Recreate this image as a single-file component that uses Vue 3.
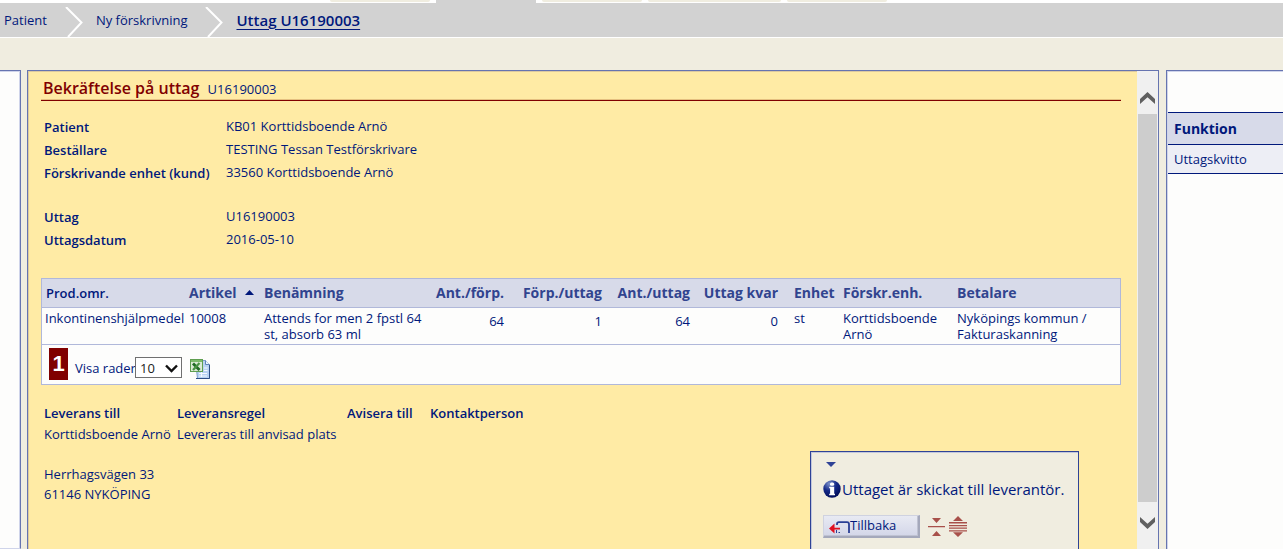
<script setup>
import { ref } from 'vue'

const tabs = [
  { id: 1, size: 'medium' },
  { id: 2, size: 'medium', active: true },
  { id: 3, size: 'medium' },
  { id: 4, size: 'wide' },
  { id: 5, size: 'medium' },
]

const patientInfo = [
  ['Patient', 'KB01 Korttidsboende Arnö'],
  ['Beställare', 'TESTING Tessan Testförskrivare'],
  ['Förskrivande enhet (kund)', '33560 Korttidsboende Arnö'],
]
const orderInfo = [
  ['Uttag', 'U16190003'],
  ['Uttagsdatum', '2016-05-10'],
]

const rows = [
  {
    area: 'Inkontinenshjälpmedel',
    article: '10008',
    name: 'Attends for men 2 fpstl 64 st, absorb 63 ml',
    perPack: 64,
    packs: 1,
    amount: 64,
    left: 0,
    unit: 'st',
    prescriber: 'Korttidsboende Arnö',
    payer: 'Nyköpings kommun / Fakturaskanning',
  },
]

const pageSize = ref('10')
</script>

<template>
  <div class="page">
    <div class="tabs">
      <span v-for="t in tabs" :key="t.id" class="tab" :class="[t.size, { active: t.active }]"></span>
    </div>

    <nav class="crumbs">
      <a href="#">Patient</a>
      <svg class="chevron" width="18" height="30" viewBox="0 0 18 30"><path d="M1 0 16.500 15.500 3 30" /></svg>
      <a href="#">Ny förskrivning</a>
      <svg class="chevron" width="18" height="30" viewBox="0 0 18 30"><path d="M1 0 16.500 15.500 3 30" /></svg>
      <a href="#" class="current">Uttag U16190003</a>
    </nav>

    <div class="columns">
      <aside class="left panel"></aside>

      <main class="center panel">
        <div class="content">
          <h1>Bekräftelse på uttag <small>U16190003</small></h1>

          <dl class="info">
            <template v-for="[k, v] in patientInfo" :key="k">
              <dt>{{ k }}</dt>
              <dd>{{ v }}</dd>
            </template>
          </dl>
          <dl class="info">
            <template v-for="[k, v] in orderInfo" :key="k">
              <dt>{{ k }}</dt>
              <dd>{{ v }}</dd>
            </template>
          </dl>

          <div class="grid">
            <table class="items">
              <colgroup>
                <col class="c-area" /><col class="c-article" /><col class="c-name" />
                <col class="c-pack" /><col class="c-packs" /><col class="c-amount" />
                <col class="c-amount" /><col class="c-unit" /><col class="c-presc" /><col />
              </colgroup>
              <thead>
                <tr>
                  <th class="plain">Prod.omr.</th>
                  <th>
                    <span class="sorted">Artikel
                      <svg width="9" height="5" viewBox="0 0 9 5"><path d="M0 5 4.500 0 9 5z" fill="#00187b" /></svg>
                    </span>
                  </th>
                  <th>Benämning</th>
                  <th class="num">Ant./förp.</th>
                  <th class="num">Förp./uttag</th>
                  <th class="num">Ant./uttag</th>
                  <th class="num">Uttag kvar</th>
                  <th class="unit">Enhet</th>
                  <th>Förskr.enh.</th>
                  <th>Betalare</th>
                </tr>
              </thead>
              <tbody>
                <tr v-for="r in rows" :key="r.article">
                  <td>{{ r.area }}</td>
                  <td>{{ r.article }}</td>
                  <td>{{ r.name }}</td>
                  <td class="num">{{ r.perPack }}</td>
                  <td class="num">{{ r.packs }}</td>
                  <td class="num">{{ r.amount }}</td>
                  <td class="num">{{ r.left }}</td>
                  <td class="unit">{{ r.unit }}</td>
                  <td>{{ r.prescriber }}</td>
                  <td>{{ r.payer }}</td>
                </tr>
              </tbody>
            </table>
            <div class="pager">
              <strong class="pageno">1</strong>
              <label for="size">Visa rader</label>
              <span class="select">
                <select id="size" v-model="pageSize">
                  <option>10</option>
                  <option>25</option>
                  <option>50</option>
                </select>
                <svg width="13" height="9" viewBox="0 0 13 9"><path d="M1 1.500 6.500 7 12 1.500" fill="none" stroke="#111" stroke-width="2.400" /></svg>
              </span>
              <button class="excel" aria-label="Excel">
                <svg width="20" height="20" viewBox="0 0 20 20">
                  <path d="M5.500 1.500h10l4 4v14h-12z" fill="#b9d3f3" stroke="#7d9fcb" />
                  <path d="M15.500 1.500v4h4" fill="#eef6ff" stroke="#5f84b8" />
                  <path d="M19.500 6v13.500H6" fill="none" stroke="#2f4f86" />
                  <path d="M9 17h8M9 14.500h8M14 9h3.500M14 11.500h3.500M11.500 13v5" stroke="#f4f9ff" />
                  <rect x=".5" y=".5" width="12" height="12" fill="#dcebd6" stroke="#5f9e50" />
                  <path d="M1 2h11" stroke="#7dbb6c" stroke-width="2" />
                  <path d="m3 4.500 6.500 6.500" stroke="#216b26" stroke-width="2.800" />
                  <path d="M9.500 4 3 11" stroke="#4a9444" stroke-width="2.200" />
                </svg>
              </button>
            </div>
          </div>

          <table class="delivery">
            <colgroup><col class="d-to" /><col class="d-rule" /><col class="d-notify" /><col /></colgroup>
            <thead>
              <tr><th>Leverans till</th><th>Leveransregel</th><th>Avisera till</th><th>Kontaktperson</th></tr>
            </thead>
            <tbody>
              <tr><td>Korttidsboende Arnö</td><td>Levereras till anvisad plats</td><td></td><td></td></tr>
              <tr><td></td><td></td><td></td><td></td></tr>
              <tr><td>Herrhagsvägen 33</td><td></td><td></td><td></td></tr>
              <tr><td>61146 NYKÖPING</td><td></td><td></td><td></td></tr>
            </tbody>
          </table>
        </div>

        <div class="scrollbar" aria-hidden="true">
          <svg width="15" height="12" viewBox="0 0 15 12"><path d="M0 7 7.500 0 15 7V12L7.500 5.300 0 12z" /></svg>
          <div class="thumb"></div>
          <svg width="15" height="12" viewBox="0 0 15 12"><path d="M0 5 7.500 12 15 5V0L7.500 6.700 0 0z" /></svg>
        </div>

        <section class="message">
          <button class="fold" aria-label="Fäll ihop">
            <svg width="10" height="5" viewBox="0 0 10 5"><path d="M0 0h10L5 5z" fill="#2f4396" /></svg>
          </button>
          <p>
            <svg width="18" height="18" viewBox="0 0 18 18">
              <defs>
                <radialGradient id="ball" cx=".35" cy=".2" r=".8">
                  <stop offset="0" stop-color="#7d92cb" />
                  <stop offset=".5" stop-color="#152a88" />
                  <stop offset="1" stop-color="#020f5c" />
                </radialGradient>
              </defs>
              <circle cx="9" cy="9" r="8.700" fill="url(#ball)" />
              <rect x="7" y="2.500" width="4.200" height="3.200" rx="1.500" fill="#fff" />
              <path d="M6.200 6.800h5v7h.8v1.400H6.200v-1.400h.9V8.200h-.9z" fill="#fff" />
            </svg>
            Uttaget är skickat till leverantör.
          </p>
          <div class="actions">
            <button class="back">
              <svg width="21" height="13" viewBox="0 0 21 13">
                <path d="M8 4V3Q8 1.200 10 1.200H18Q20 1.200 20 3.200V12" fill="none" stroke="#2a3f95" stroke-width="1.800" />
                <path d="M7.500 9v3M9.500 11.500h1.500" stroke="#2a3f95" />
                <path d="M0 7.500 5.500 2.500V6.700H11V8.500H5.500V12.500z" fill="#e01020" />
              </svg>
              <span>Tillbaka</span>
            </button>
            <button class="icon" aria-label="Minimera">
              <svg width="17" height="20" viewBox="0 0 17 20" fill="#a8504a"><path d="M4 1h9L8.500 6zM0 9h17v1.300H0zM4 19h9l-4.500-5z" /></svg>
            </button>
            <button class="icon" aria-label="Maximera">
              <svg width="18" height="21" viewBox="0 0 18 21" fill="#a8504a"><path d="M4 5h10L9 0zM0 6h18v1.400H0zM0 9h18v1.200H0zM0 11.600h18v1.200H0zM0 14.200h18v1.200H0zM4 16.200h10l-5 4.800z" /></svg>
            </button>
          </div>
        </section>
      </main>

      <aside class="right panel">
        <h2>Funktion</h2>
        <a href="#">Uttagskvitto</a>
      </aside>
    </div>
  </div>
</template>

<style>
body { margin: 0; }
</style>

<style scoped>
* { box-sizing: border-box; }
.page {
  height: 100vh;
  display: flex;
  flex-direction: column;
  overflow: hidden;
  background: #f0ede0;
  color: #00187b;
  font: 13px/16px "Trebuchet MS", "Open Sans", sans-serif;
}
button { border: 0; padding: 0; background: none; font: inherit; color: inherit; }
svg { display: block; flex: none; }
a { color: inherit; text-decoration: none; }

.tabs { display: flex; gap: 6px; height: 3px; padding-left: 330px; background: #fff; flex: none; }
.tab { width: 100px; height: 2px; background: #f0ede0; border-radius: 0 0 3px 3px; }
.tab.wide { width: 133px; }
.tab.active { height: 3px; background: #d2d2d2; border-radius: 0; }

.crumbs {
  flex: none;
  display: flex;
  align-items: center;
  height: 35px;
  padding-left: 4px;
  background: #d2d2d2;
  border-bottom: 1px solid #fff;
}
.chevron { margin: 3px 13px 0 18px; }
.chevron path { fill: none; stroke: #fff; stroke-width: 2; }
.crumbs .current { font-size: 15px; font-weight: 600; text-decoration: underline; text-underline-offset: 3px; }

.columns { flex: 1; min-height: 0; display: flex; padding-top: 32px; }
.panel { border: 1px solid #6674b0; background: #fdfdfc; }
.left { width: 21px; flex: none; margin-right: 6px; border-left: 0; border-bottom-color: #cfd4ea; box-shadow: inset -1px 1px #cfd4ea; }
.center { position: relative; flex: 1; min-width: 0; display: flex; background: #ffeba5; border-bottom: 0; }
.right { width: 117px; flex: none; margin-left: 7px; border-right: 0; border-bottom: 0; padding: 41px 0 0 1px; box-shadow: inset 1px 1px #cfd4ea; }

.content { flex: 1; min-width: 0; padding: 7px 16px 0 13px; box-shadow: inset 1px 1px #dcc9a0; }
h1 { margin: 0 0 15px; padding: 0 2px 1px; font-size: 16px; line-height: 20px; font-weight: 600; color: #800000; border-bottom: 1px solid #800000; box-shadow: inset 0 -1px #e5c080; }
h1 small { margin-left: 4px; font-size: 13px; font-weight: 400; color: #00187b; }

.info { display: grid; grid-template-columns: 182px 1fr; margin: 0 0 21px; padding-left: 3px; line-height: 23px; }
.info dt { font-weight: 600; }
.info dd { margin: 0; line-height: 21px; }

.grid { margin-top: 26px; border: 1px solid #b0b8da; background: #fdfdfc; }
.items { width: 100%; table-layout: fixed; border-collapse: collapse; }
.c-area { width: 143px; }
.c-article { width: 75px; }
.c-name { width: 168px; }
.c-pack { width: 80px; }
.c-packs { width: 98px; }
.c-amount { width: 88px; }
.c-unit { width: 57px; }
.c-presc { width: 114px; }
.items th { height: 28px; padding: 0 4px; background: #d7dae9; color: #31448f; font-size: 14px; font-weight: 700; text-align: left; white-space: nowrap; }
.items th.plain { color: #00187b; font-size: 13px; font-weight: 600; }
.items td { padding: 2px 4px; vertical-align: top; }
.items tr { border-bottom: 1px solid #b0b8da; }
.items td:first-child { padding-right: 0; padding-left: 3px; white-space: nowrap; }
.items .num { text-align: right; }
.items td.num { padding-top: 5px; }
.items .unit { padding-left: 12px; padding-right: 0; }
.sorted { display: flex; align-items: center; gap: 8px; }

.pager { display: flex; align-items: center; height: 39px; padding-left: 7px; }
.pageno { width: 19px; height: 32px; margin-right: 7px; background: #800000; color: #fff; font-family: "Liberation Sans", Arial, sans-serif; font-size: 22px; line-height: 32px; text-align: center; }
.pager label { width: 60px; margin-top: 7px; white-space: nowrap; }
.select { position: relative; margin-top: 7px; }
.select select { display: block; appearance: none; width: 47px; height: 21px; padding: 0 4px; border: 1px solid #707070; border-radius: 0; background: #fff; color: #222; font: inherit; }
.select svg { position: absolute; right: 4px; top: 7px; pointer-events: none; }
.excel { margin: 9px 0 0 8px; }

.delivery { margin: 17px 0 0 3px; border-collapse: collapse; }
.d-to { width: 133px; }
.d-rule { width: 170px; }
.d-notify { width: 83px; }
.delivery th, .delivery td { height: 20px; padding: 0; text-align: left; white-space: nowrap; }
.delivery th { height: 22px; font-weight: 600; }

.scrollbar { flex: none; width: 21px; padding: 21px 1px 20px; display: flex; flex-direction: column; align-items: center; background: #f0f0f0; }
.scrollbar svg { fill: #606060; }
.thumb { flex: 1; align-self: stretch; margin: 10px 0 15px; background: #cdcdcd; }

.message { position: absolute; right: 79px; bottom: 0; width: 269px; height: 98px; padding: 10px 12px 0; background: #f0ede0; border: 1px solid #2f4396; border-bottom: 0; box-shadow: inset 1px 1px #c3c8dc; }
.fold { display: block; margin-left: 3px; }
.message p { display: flex; align-items: center; gap: 1px; height: 20px; margin: 12px 0 16px; font-size: 15px; white-space: nowrap; }
.actions { display: flex; align-items: center; }
.back { display: flex; align-items: center; width: 97px; height: 23px; margin-right: 8px; padding: 0 0 0 5px; background: linear-gradient(#e8eaf3, #d3d6e8); border: 1px solid #cfd2e0; border-right: 2px solid #a4a8bb; border-bottom: 2px solid #a4a8bb; box-shadow: inset -1px -1px #bfc2d2; }
.back svg { margin-top: 3px; }
.back span { padding-bottom: 2px; }
.icon { margin-right: 4px; }

.right h2 { margin: 0; padding-left: 6px; height: 33px; line-height: 32px; font-size: 14px; font-weight: 700; background: #d7dae9; border: solid #00187b; border-width: 1px 0; }
.right a { display: block; height: 29px; padding-left: 6px; line-height: 28px; background: #edeef5; border-bottom: 1px solid #00187b; }
</style>
